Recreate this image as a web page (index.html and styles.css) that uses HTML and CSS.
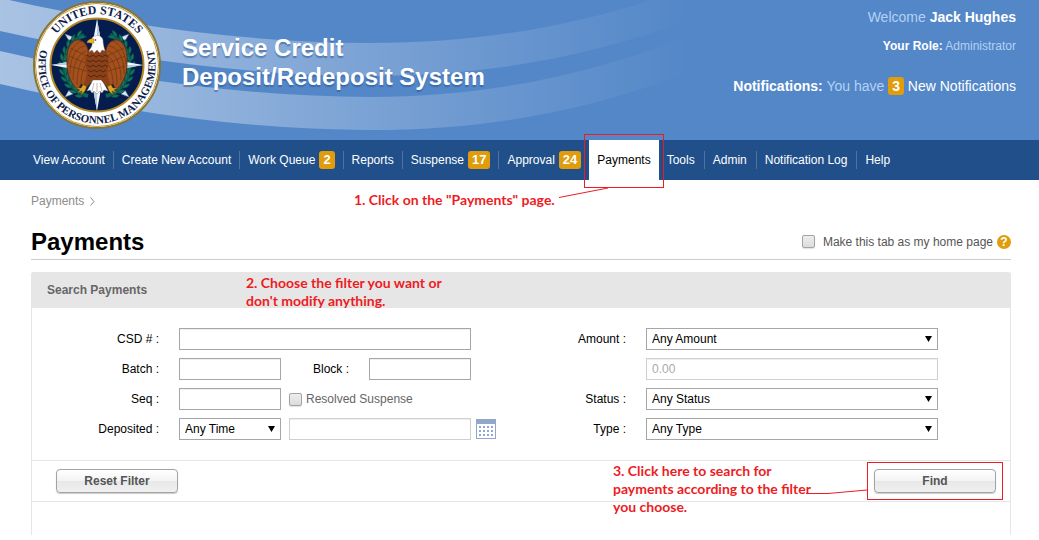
FILE: index.html
```html
<!DOCTYPE html>
<html lang="en">
<head>
<meta charset="utf-8">
<meta name="viewport" content="width=device-width, initial-scale=1">
<title>Payments - Service Credit Deposit/Redeposit System</title>
<link rel="stylesheet" href="styles.css">
</head>
<body>
<header class="banner">
  <svg class="waves" width="700" height="140" viewBox="0 0 700 140" aria-hidden="true">
    <defs>
      <linearGradient id="fade" gradientUnits="userSpaceOnUse" x1="0" y1="0" x2="690" y2="0">
        <stop offset="0" stop-color="#fff" stop-opacity=".5"/>
        <stop offset=".25" stop-color="#fff" stop-opacity=".38"/>
        <stop offset=".72" stop-color="#fff" stop-opacity=".13"/>
        <stop offset="1" stop-color="#fff" stop-opacity="0"/>
      </linearGradient>
    </defs>
    <path fill="url(#fade)" d="M0-2C120 25 250 43 370 43C490 43 590 23 690-13V20C590 56 490 76 370 76C250 76 120 58 0 31Z"/>
    <path fill="url(#fade)" d="M0 51C120 79 250 97 370 97C490 97 590 74 690 36V72C590 110 490 130 370 130C250 130 120 112 0 84Z"/>
  </svg>
  <a class="brand" href="#">
    <svg class="seal" width="130" height="130" viewBox="0 0 130 130" role="img" aria-label="Seal">
      <defs>
        <path id="arcTop" d="M14 65A51 51 0 0 1 116 65"/>
        <path id="arcBottom" d="M65 6.500A58.500 58.500 0 0 0 65 123.500A58.500 58.500 0 0 0 65 6.500"/>
        <g id="leaf"><path d="M31 65q-5-3-3-8q4 3 3 8M31 65q5-3 5-8q-5 2-5 8" fill="#12745c" stroke="#064a48" stroke-width=".5"/></g>
        <g id="laurel">
          <path d="M56 96A32.500 32.500 0 0 1 52 35" fill="none" stroke="#0d6654" stroke-width="4"/>
          <use href="#leaf" transform="rotate(-66 65 65)"/><use href="#leaf" transform="rotate(-54 65 65)"/>
          <use href="#leaf" transform="rotate(-42 65 65)"/><use href="#leaf" transform="rotate(-30 65 65)"/>
          <use href="#leaf" transform="rotate(-18 65 65)"/><use href="#leaf" transform="rotate(-6 65 65)"/>
          <use href="#leaf" transform="rotate(6 65 65)"/><use href="#leaf" transform="rotate(18 65 65)"/>
          <use href="#leaf" transform="rotate(30 65 65)"/><use href="#leaf" transform="rotate(42 65 65)"/>
          <use href="#leaf" transform="rotate(54 65 65)"/>
        </g>
        <g id="wing">
          <path d="M56 50C54 40 45 37 40 43C35 48 35 55 35 64C35 75 40 85 46 90L49 84L53 86L58 76Z" fill="#a3501d" stroke="#5d2b10" stroke-width=".8"/>
          <path d="M53 46C44 47 38 58 38 74M54 51C46 54 41 64 41 80M55 55C49 59 45 68 45 85M56 61C52 66 49 74 49 84M57 67L53 84M50 41C42 43 37 52 36 64M38 48L55 56M37 56L56 64M37 66L57 72" fill="none" stroke="#5d2b10" stroke-width=".5"/>
        </g>
        <g id="foot"><path d="M52 83L49 88L44 88L48 90L45 93L50 91L49 95L53 91L55 86Z" fill="#e0a51c" stroke="#6a4508" stroke-width=".5"/></g>
      </defs>
      <circle cx="65" cy="65" r="63" fill="#fff" stroke="#84753a" stroke-width="2"/>
      <circle cx="65" cy="65" r="61.500" fill="none" stroke="#c99a2c" stroke-width="1"/>
      <circle cx="65" cy="65" r="46.500" fill="#041c4e" stroke="#b48a26" stroke-width="2"/>
      <g fill="#dbe8f0" stroke="#5b7899" stroke-width=".5">
        <path d="M33 34l8 3l-4 4zM97 34l-8 3l4 4zM33 97l8-3l-4-4zM97 97l-8-3l4-4z"/>
      </g>
      <use href="#laurel"/>
      <use href="#laurel" transform="matrix(-1 0 0 1 130 0)"/>
      <path d="M65 19L72 58L111 65L72 72L65 111L58 72L19 65L58 58Z" fill="#f1f6fa"/>
      <path d="M65 19V65L72 58ZM111 65H65L72 72ZM65 111V65L58 72ZM19 65H65L58 58Z" fill="#b9cbdc"/>
      <path d="M61 80L55 91L58 90L60 93L62 91L65 94L68 91L70 93L72 90L76 91L70 80Z" fill="#fff" stroke="#8a8175" stroke-width=".5"/>
      <path d="M62 83l-2 8M65 83v9M68 83l2 8" stroke="#9b9083" stroke-width=".6"/>
      <use href="#wing"/>
      <use href="#wing" transform="matrix(-1 0 0 1 130 0)"/>
      <use href="#foot"/>
      <use href="#foot" transform="matrix(-1 0 0 1 130 0)"/>
      <path d="M57 49H73L77 60L75 76L79 85L75 87L69 80H61L55 87L51 85L55 76L53 60Z" fill="#8a4119"/>
      <path d="M55 55l3 2 3-2 3 2 3-2 3 2 3-2 3 2M55 60l3 2 3-2 3 2 3-2 3 2 3-2 3 2M55 65l3 2 3-2 3 2 3-2 3 2 3-2 3 2M56 70l3 2 3-2 3 2 3-2 3 2 3-2M56 75l3 2 3-2 3 2 3-2 3 2 3-2" fill="none" stroke="#54260d" stroke-width="1"/>
      <path d="M60 38C63 34 70 35 71 40C71 44 72 47 73 51L70 50L68 53L65 50L62 53L60 50L57 52C58 48 61 46 60 43Z" fill="#fff" stroke="#7f7d7d" stroke-width=".4"/>
      <path d="M62 39C59 38 55 40 55 43C57 42 60 44 62 43Z" fill="#f1b51c" stroke="#9b6b09" stroke-width=".4"/>
      <circle cx="63.500" cy="40" r=".8" fill="#222"/>
      <text class="seal-top" text-anchor="middle"><textPath href="#arcTop" startOffset="50%">UNITED STATES</textPath></text>
      <text class="seal-bottom" text-anchor="middle"><textPath href="#arcBottom" startOffset="50%">OFFICE OF PERSONNEL MANAGEMENT</textPath></text>
    </svg>
    <span class="brand-name">Service Credit<br>Deposit/Redeposit System</span>
  </a>
  <div class="account">
    <p class="welcome">Welcome <strong>Jack Hughes</strong></p>
    <p class="role"><strong>Your Role:</strong> Administrator</p>
    <p class="notices"><strong>Notifications:</strong> You have <a href="#"><span class="count">3</span> New Notifications</a></p>
  </div>
</header>

<nav class="tabs" aria-label="Main">
  <a href="#">View Account</a>
  <a href="#">Create New Account</a>
  <a href="#">Work Queue <span class="count">2</span></a>
  <a href="#">Reports</a>
  <a href="#">Suspense <span class="count">17</span></a>
  <a href="#" class="no-rule">Approval <span class="count">24</span></a>
  <div class="current-tab">
    <a href="#" class="current" aria-current="page">Payments</a>
    <span class="frame tab-frame"></span>
    <svg class="tab-line" width="50" height="12" viewBox="0 0 50 12" aria-hidden="true"><path d="M0 10.500L49 1"/></svg>
    <span class="note tab-note">1. Click on the "Payments" page.</span>
  </div>
  <a href="#">Tools</a>
  <a href="#">Admin</a>
  <a href="#">Notification Log</a>
  <a href="#" class="no-rule">Help</a>
</nav>

<main class="page">
  <div class="crumbs"><a href="#">Payments</a>
    <svg width="5" height="9" viewBox="0 0 5 9" aria-hidden="true"><path d="M.5.500L4 4.500L.5 8.500"/></svg>
  </div>
  <div class="heading">
    <h1>Payments</h1>
    <div class="home-option">
      <input type="checkbox" class="check" id="home">
      <label for="home">Make this tab as my home page</label>
      <button type="button" class="help" aria-label="Help">?</button>
    </div>
  </div>

  <form class="panel">
    <div class="panel-head">
      <h2>Search Payments</h2>
      <span class="note filter-note">2. Choose the filter you want or<br>don't modify anything.</span>
    </div>
    <div class="fields">
      <label for="csd">CSD # :</label>
      <input type="text" class="box" id="csd">
      <label for="amount">Amount :</label>
      <div class="pick"><select class="box" id="amount"><option>Any Amount</option></select></div>

      <label for="batch">Batch :</label>
      <div class="field-row">
        <input type="text" class="box short" id="batch">
        <label class="grow" for="block">Block :</label>
        <input type="text" class="box short block" id="block">
      </div>
      <input type="text" class="box second" placeholder="0.00" aria-label="Amount value" disabled>

      <label for="seq">Seq :</label>
      <div class="field-row">
        <input type="text" class="box short" id="seq">
        <div class="resolved">
          <input type="checkbox" class="check" id="resolved">
          <label for="resolved">Resolved Suspense</label>
        </div>
      </div>
      <label for="status">Status :</label>
      <div class="pick"><select class="box" id="status"><option>Any Status</option></select></div>

      <label for="deposited">Deposited :</label>
      <div class="field-row">
        <div class="pick short"><select class="box" id="deposited"><option>Any Time</option></select></div>
        <input type="text" class="box grow" aria-label="Deposit date" disabled>
        <button type="button" class="calendar" aria-label="Choose date">
          <svg width="20" height="20" viewBox="0 0 20 20" aria-hidden="true">
            <path fill="#fff" d="M0 0h20v20H0z"/>
            <path fill="#91a7cb" d="M0 0h20v20H0zM1 5v14h18V5z" fill-rule="evenodd"/>
            <path stroke="#91a7cb" stroke-width="2" stroke-dasharray="2" d="M3 8h14M3 12h14M3 16h14"/>
          </svg>
        </button>
      </div>
      <label for="type">Type :</label>
      <div class="pick"><select class="box" id="type"><option>Any Type</option></select></div>
    </div>
    <div class="actions">
      <button type="reset" class="push">Reset Filter</button>
      <span class="note find-note">3. Click here to search for<br>payments according to the filter<br>you choose.</span>
      <div class="find">
        <button type="button" class="push">Find</button>
        <span class="frame find-frame"></span>
        <svg class="find-line" width="62" height="6" viewBox="0 0 62 6" aria-hidden="true"><path d="M0 4.500H22L61 1"/></svg>
      </div>
    </div>
    <div class="results"></div>
  </form>
</main>
</body>
</html>
```
FILE: styles.css
```css
* { box-sizing: border-box; }

body {
  margin: 0;
  background: #fff;
  color: #000;
  font: 12px/18px "Liberation Sans", Arial, sans-serif;
}

a { color: inherit; text-decoration: none; }
p, h1, h2 { margin: 0; }
input, select, button { font: inherit; margin: 0; }

/* Banner */
.banner {
  position: relative;
  display: flex;
  justify-content: space-between;
  height: 140px;
  padding: 0 23px 0 32px;
  background: #5487c8;
  color: #b3d1f5;
  overflow: hidden;
}
.waves { position: absolute; left: 0; top: 0; }
.brand { position: relative; display: flex; gap: 20px; }
.brand-name {
  padding-top: 33px;
  color: #fff;
  font-size: 24px;
  font-weight: bold;
  line-height: 29px;
  text-shadow: 0 2px 1px rgba(40, 80, 140, .5);
  white-space: nowrap;
}
.seal text {
  fill: #0b2149;
  font-family: "Liberation Serif", "Times New Roman", serif;
  font-weight: bold;
}
.seal-top { font-size: 12px; }
.seal-bottom { font-size: 11px; }
.account {
  position: relative;
  display: flex;
  flex-direction: column;
  padding-top: 8px;
  font-size: 14px;
  text-align: right;
  white-space: nowrap;
}
.account strong, .account a { color: #fff; }
.role { padding-top: 11px; font-size: 12px; }
.notices { padding-top: 22px; }

.count {
  display: inline-block;
  padding: 0 4px;
  border-radius: 3px;
  background: #e09c0a;
  color: #fff;
  font-weight: bold;
  line-height: 18px;
}

/* Tabs */
.tabs {
  display: flex;
  align-items: center;
  height: 40px;
  padding-left: 25px;
  background: #204f8a;
  color: #fff;
  white-space: nowrap;
}
.tabs a {
  display: flex;
  gap: 4px;
  align-items: center;
  height: 18px;
  padding: 0 8px;
  border-right: 1px solid #4d73a5;
}
.tabs .no-rule { border-right: 0; }
.current-tab ~ a { padding-right: 9px; }
.tabs .count { font-size: 13px; }
.current-tab { position: relative; }
.tabs .current {
  height: 40px;
  border-right: 0;
  background: #fff;
  color: #000;
}

/* Walkthrough marks */
.note {
  position: absolute;
  color: #ed1c24;
  font: bold 14px/18px Lato, Carlito, Calibri, sans-serif;
  white-space: nowrap;
}
.frame { position: absolute; border: 1px solid #ed1c24; pointer-events: none; }
.tab-line, .find-line { position: absolute; fill: none; stroke: #ed1c24; }
.tab-frame { inset: -6px -5px -8px; }
.tab-line { left: -30px; top: 47px; }
.tab-note { right: 104px; top: 51px; }
.filter-note { left: 215px; top: 2px; }
.find-note { right: 197px; top: 1px; width: 200px; }
.find-frame { inset: -7px; }
.find-line { right: 128px; top: 20px; }

/* Page */
.page { padding: 12px 28px 5px 31px; }
.crumbs { display: flex; align-items: center; gap: 6px; color: #8c8c8c; }
.crumbs svg { fill: none; stroke: #8c8c8c; }
.heading {
  display: flex;
  justify-content: space-between;
  align-items: center;
  height: 50px;
  padding-top: 14px;
  border-bottom: 1px solid #ccc;
}
h1 { font-size: 24px; line-height: 28px; }
.home-option { display: flex; align-items: center; color: #555; }
.home-option label { padding: 0 4px 0 8px; }
.help {
  width: 14px;
  height: 14px;
  padding: 0;
  border: 0;
  border-radius: 50%;
  background: #e09c0a;
  color: #fff;
  font-weight: bold;
  line-height: 14px;
}
.check {
  appearance: none;
  width: 13px;
  height: 13px;
  border: 1px solid #a3a3a3;
  border-radius: 2px;
  background: linear-gradient(#ededed, #dcdcdc);
  box-shadow: 0 1px 1px #e2e2e2;
}

/* Search panel */
.panel {
  margin-top: 12px;
  border: solid #e6e6e6;
  border-width: 0 1px;
  border-radius: 3px 3px 0 0;
}
.panel-head {
  position: relative;
  display: flex;
  align-items: center;
  height: 36px;
  margin: 0 -1px;
  padding: 0 16px;
  border-radius: 3px 3px 0 0;
  background: #e6e6e6;
}
h2 { color: #666; font-size: 12px; line-height: 18px; }
.fields {
  display: grid;
  grid-template-columns: 127px 1fr 135px 1fr;
  gap: 8px 20px;
  align-items: center;
  padding: 20px 72px 20px 0;
}
.fields > label { text-align: right; }
.second { grid-column: 4; }
.box {
  display: block;
  width: 100%;
  min-width: 0;
  height: 22px;
  padding: 0 5px;
  border: 1px solid #a6a6a6;
  border-radius: 0;
  background: #fff;
  color: #000;
  box-shadow: inset 0 1px 1px #eee;
}
.box:disabled { border-color: #d0d0d0; }
.box::placeholder { color: #a9a9a9; opacity: 1; }
.field-row { display: flex; align-items: center; gap: 8px; }
.field-row .short { flex: none; width: 102px; }
.field-row .grow { flex: 1; }
.field-row label.grow { text-align: right; }
.field-row .block { margin-left: 12px; }
.resolved { display: flex; align-items: center; gap: 4px; color: #666; }
.pick { position: relative; }
.pick select { appearance: none; box-shadow: none; }
.pick::after {
  content: "";
  position: absolute;
  right: 6px;
  top: 8px;
  width: 7px;
  height: 6px;
  background: #000;
  clip-path: polygon(0 0, 100% 0, 50% 100%);
  pointer-events: none;
}
.calendar {
  flex: none;
  height: 20px;
  margin: 0 -25px 0 -3px;
  padding: 0;
  border: 0;
  background: none;
}
.calendar svg { display: block; }
.actions {
  position: relative;
  display: flex;
  justify-content: space-between;
  align-items: center;
  height: 42px;
  padding: 0 14px 0 24px;
  border: solid #e6e6e6;
  border-width: 1px 0;
}
.find { position: relative; }
.push {
  display: block;
  width: 122px;
  height: 24px;
  padding: 0;
  border: 1px solid #a3a3a3;
  border-radius: 4px;
  background: linear-gradient(#fff, #f3f3f3 50%, #e8e8e8 51%, #f0f0f0);
  box-shadow: 0 1px 1px #ccc;
  color: #555;
  font-weight: bold;
}
.results { min-height: 33px; }
```
